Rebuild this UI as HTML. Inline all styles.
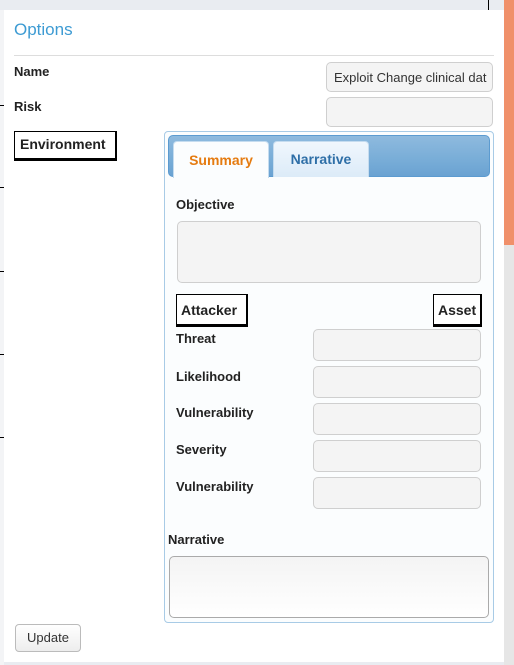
<!DOCTYPE html>
<html><head><style>
body{margin:0;width:514px;height:665px;position:relative;overflow:hidden;background:#e9ecf1;font-family:"Liberation Sans",sans-serif;}
.a{position:absolute;}
.lbl{position:absolute;font-weight:bold;font-size:13px;color:#222;}
.in{position:absolute;background:#f4f4f4;border:1px solid #cfcfcf;border-radius:5px;box-sizing:border-box;}
.box{position:absolute;border:1px solid #000;border-bottom-width:3px;border-right-width:2px;background:#fff;font-weight:bold;font-size:13px;color:#222;box-sizing:border-box;padding:3px 4px;}
</style></head><body>
<div class="a" style="left:0;top:10px;width:4px;height:655px;background:#f3f4f6"></div>
<div class="a" style="left:0;top:105px;width:4px;height:1px;background:#000"></div>
<div class="a" style="left:0;top:187px;width:4px;height:1px;background:#000"></div>
<div class="a" style="left:0;top:271px;width:4px;height:1px;background:#000"></div>
<div class="a" style="left:0;top:354px;width:4px;height:1px;background:#000"></div>
<div class="a" style="left:0;top:437px;width:4px;height:1px;background:#000"></div>
<div class="a" style="left:488px;top:0;width:1px;height:10px;background:#000"></div>
<div class="a" style="left:504px;top:0;width:10px;height:245px;background:#f0906a"></div>
<div class="a" style="left:504px;top:245px;width:10px;height:420px;background:#e6e6e6"></div>
<div class="a" style="left:4px;top:10px;width:500px;height:652px;background:#fff"></div>
<div class="a" style="left:14px;top:20px;font-size:17px;color:#3d9bd3">Options</div>
<div class="a" style="left:14px;top:55px;width:480px;height:1px;background:#ddd"></div>
<div class="lbl" style="left:14px;top:64px">Name</div>
<div class="lbl" style="left:14px;top:99px">Risk</div>
<div class="in" style="left:326px;top:62px;width:167px;height:30px;font-size:13px;color:#333;padding:7px 0 0 7px;overflow:hidden;white-space:nowrap">Exploit Change clinical dat</div>
<div class="in" style="left:326px;top:97px;width:167px;height:30px"></div>
<div class="box" style="left:14px;top:131px;width:103px;height:30px;font-size:14px;padding:4px 5px">Environment</div>
<div class="a" style="left:164px;top:131px;width:330px;height:492px;border:1px solid #a8cbe6;border-radius:4px;background:#fbfdfe;box-sizing:border-box"></div>
<div class="a" style="left:168px;top:135px;width:322px;height:42px;border:1px solid #5c9bd0;border-radius:5px;background:linear-gradient(#8ebade,#7aaed8 55%,#6aa2d2);box-sizing:border-box"></div>
<div class="a" style="left:173px;top:141px;width:96px;height:37px;background:#fbfdfe;border:1px solid #c5dcef;border-bottom:none;border-radius:4px 4px 0 0;box-sizing:border-box;font-weight:bold;font-size:14px;color:#e57b10;text-align:center;line-height:36px">Summary</div>
<div class="a" style="left:273px;top:141px;width:96px;height:36px;background:linear-gradient(#f0f7fd,#dcebf8);border:1px solid #c5dcef;border-bottom:none;border-radius:4px 4px 0 0;box-sizing:border-box;font-weight:bold;font-size:14px;color:#2e6fa7;text-align:center;line-height:34px">Narrative</div>
<div class="lbl" style="left:176px;top:197px">Objective</div>
<div class="in" style="left:177px;top:221px;width:304px;height:62px"></div>
<div class="box" style="left:176px;top:294px;width:72px;height:33px;padding-top:7px;font-size:14px">Attacker</div>
<div class="box" style="left:433px;top:294px;width:49px;height:33px;padding-top:7px;font-size:14px">Asset</div>
<div class="lbl" style="left:176px;top:331px">Threat</div>
<div class="lbl" style="left:176px;top:369px">Likelihood</div>
<div class="lbl" style="left:176px;top:405px">Vulnerability</div>
<div class="lbl" style="left:176px;top:442px">Severity</div>
<div class="lbl" style="left:176px;top:479px">Vulnerability</div>
<div class="in" style="left:313px;top:329px;width:168px;height:32px"></div>
<div class="in" style="left:313px;top:366px;width:168px;height:32px"></div>
<div class="in" style="left:313px;top:403px;width:168px;height:32px"></div>
<div class="in" style="left:313px;top:440px;width:168px;height:32px"></div>
<div class="in" style="left:313px;top:477px;width:168px;height:32px"></div>
<div class="lbl" style="left:168px;top:532px">Narrative</div>
<div class="a" style="left:169px;top:556px;width:320px;height:62px;border:1px solid #aaa;border-radius:5px;background:linear-gradient(#f4f4f4,#fff);box-sizing:border-box"></div>
<div class="a" style="left:15px;top:624px;width:66px;height:28px;border:1px solid #bbb;border-radius:4px;background:linear-gradient(#fff,#ededed);box-sizing:border-box;font-size:13px;color:#333;text-align:center;line-height:26px">Update</div>
</body></html>
